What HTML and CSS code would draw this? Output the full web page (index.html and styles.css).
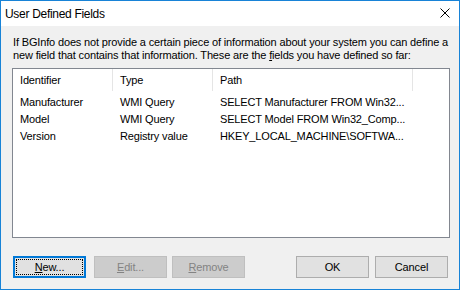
FILE: index.html
```html
<!DOCTYPE html>
<html>
<head>
<meta charset="utf-8">
<link rel="stylesheet" href="styles.css">
</head>
<body>
<div class="window">
  <div class="titlebar">
    <span class="title">User Defined Fields</span>
    <svg class="close" width="10" height="10" viewBox="0 0 10 10"><path d="M0.5 0.5 L9.5 9.5 M9.5 0.5 L0.5 9.5" stroke="#000" stroke-width="1" fill="none"/></svg>
  </div>
  <div class="content">
    <p class="desc">If BGInfo does not provide a certain piece of information about your system you can define a new field that contains that information. These are the <u>f</u>ields you have defined so far:</p>
    <div class="listview">
      <div class="header">
        <div class="hcell c1">Identifier</div>
        <div class="hcell c2">Type</div>
        <div class="hcell c3">Path</div>
        <div class="hfill"></div>
      </div>
      <div class="rows">
        <div class="row"><div class="cell c1">Manufacturer</div><div class="cell c2">WMI Query</div><div class="cell c3">SELECT Manufacturer FROM Win32...</div></div>
        <div class="row"><div class="cell c1">Model</div><div class="cell c2">WMI Query</div><div class="cell c3">SELECT Model FROM Win32_Comp...</div></div>
        <div class="row"><div class="cell c1">Version</div><div class="cell c2">Registry value</div><div class="cell c3">HKEY_LOCAL_MACHINE\SOFTWA...</div></div>
      </div>
    </div>
    <div class="buttons">
      <div class="group">
        <button class="btn default"><span class="focus"><u>N</u>ew...</span></button>
        <button class="btn disabled gap8"><u>E</u>dit...</button>
        <button class="btn disabled gap5"><u>R</u>emove</button>
      </div>
      <div class="group">
        <button class="btn">OK</button>
        <button class="btn gap6">Cancel</button>
      </div>
    </div>
  </div>
</div>
</body>
</html>
```
FILE: styles.css
```css
html, body {
  margin: 0;
  padding: 0;
}
body {
  width: 460px;
  height: 290px;
  overflow: hidden;
  font-family: "Liberation Sans", Arial, sans-serif;
  font-size: 11px;
  letter-spacing: -0.15px;
  color: #000;
}
.window {
  box-sizing: border-box;
  width: 460px;
  height: 290px;
  border: 1px solid #1883d7;
  background: #f0f0f0;
  display: flex;
  flex-direction: column;
}
.titlebar {
  height: 25px;
  background: #fff;
  display: flex;
  align-items: center;
  justify-content: space-between;
  padding: 0 9px 0 4px;
  flex: none;
}
.title {
  font-family: "Liberation Sans", Arial, sans-serif;
  font-size: 12px;
  letter-spacing: -0.3px;
  color: #000;
}
.close {
  display: block;
  margin-top: -1px;
}
.content {
  padding: 10px 9px 0 11px;
  display: flex;
  flex-direction: column;
}
.desc {
  margin: 0 -9px 0 1px;
  line-height: 13px;
  height: 26px;
}
.listview {
  margin-top: 6px;
  box-sizing: border-box;
  width: 438px;
  height: 170px;
  border: 1px solid #828790;
  background: #fff;
}
.header {
  display: flex;
  height: 22px;
}
.hcell {
  box-sizing: border-box;
  border-right: 1px solid #e5e5e5;
  padding-left: 7px;
  line-height: 22px;
  white-space: nowrap;
}
.hfill {
  flex: 1;
}
.c1 { width: 100px; }
.c2 { width: 100px; }
.c3 { width: 200px; }
.rows {
  padding-top: 3px;
}
.row {
  display: flex;
  height: 17px;
  line-height: 17px;
}
.cell {
  box-sizing: border-box;
  padding-left: 7px;
  white-space: nowrap;
  overflow: hidden;
}
.buttons {
  margin-top: 18px;
  display: flex;
  justify-content: space-between;
  padding: 0 2px 0 1px;
}
.group {
  display: flex;
}
.btn {
  box-sizing: border-box;
  width: 73px;
  height: 22px;
  margin: 0;
  padding: 0;
  background: #e1e1e1;
  border: 1px solid #adadad;
  font-family: "Liberation Sans", Arial, sans-serif;
  font-size: 11px;
  letter-spacing: -0.15px;
  color: #000;
  display: flex;
  align-items: center;
  justify-content: center;
}
.btn.disabled {
  background: #cccccc;
  border-color: #bfbfbf;
  color: #838383;
}
.btn.default {
  border: 2px solid #0078d7;
  padding: 1px;
}
.focus {
  box-sizing: border-box;
  width: 100%;
  height: 100%;
  border: 1px dotted #000;
  display: flex;
  align-items: center;
  justify-content: center;
}
.gap8 { margin-left: 8px; }
.gap5 { margin-left: 5px; }
.gap6 { margin-left: 6px; }
```
